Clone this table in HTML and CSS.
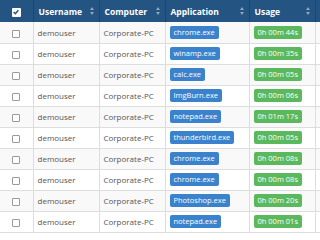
FILE: index.html
```html
<!DOCTYPE html>
<html lang="en">
  <head>
    <meta charset="UTF-8" />
    <title>Usage</title>
    <link rel="stylesheet" href="styles.css">
  </head>
  <body>
    <table class="usage">
      <colgroup>
        <col class="c-check" />
        <col class="c-user" />
        <col class="c-comp" />
        <col class="c-app" />
        <col class="c-time" />
        <col class="c-more" />
      </colgroup>
      <thead>
        <tr>
          <th class="check"><span class="box box-on">
            <svg viewBox="0 0 10 10" width="8" height="8"><path d="M2 5 L4.2 7.2 L8 2.8" fill="none" stroke="#245482" stroke-width="1.8" /></svg>
          </span></th>
          <th>Username<span class="sort"></span></th>
          <th>Computer<span class="sort"></span></th>
          <th>Application<span class="sort"></span></th>
          <th>Usage<span class="sort"></span></th>
          <th></th>
        </tr>
      </thead>
      <tbody>
        <tr><td class="check"><span class="box"></span></td><td>demouser</td><td>Corporate-PC</td><td><span class="label app">chrome.exe</span></td><td><span class="label time">0h 00m 44s</span></td><td></td></tr>
        <tr><td class="check"><span class="box"></span></td><td>demouser</td><td>Corporate-PC</td><td><span class="label app">winamp.exe</span></td><td><span class="label time">0h 00m 35s</span></td><td></td></tr>
        <tr><td class="check"><span class="box"></span></td><td>demouser</td><td>Corporate-PC</td><td><span class="label app">calc.exe</span></td><td><span class="label time">0h 00m 05s</span></td><td></td></tr>
        <tr><td class="check"><span class="box"></span></td><td>demouser</td><td>Corporate-PC</td><td><span class="label app">ImgBurn.exe</span></td><td><span class="label time">0h 00m 06s</span></td><td></td></tr>
        <tr><td class="check"><span class="box"></span></td><td>demouser</td><td>Corporate-PC</td><td><span class="label app">notepad.exe</span></td><td><span class="label time">0h 01m 17s</span></td><td></td></tr>
        <tr><td class="check"><span class="box"></span></td><td>demouser</td><td>Corporate-PC</td><td><span class="label app">thunderbird.exe</span></td><td><span class="label time">0h 00m 05s</span></td><td></td></tr>
        <tr><td class="check"><span class="box"></span></td><td>demouser</td><td>Corporate-PC</td><td><span class="label app">chrome.exe</span></td><td><span class="label time">0h 00m 08s</span></td><td></td></tr>
        <tr><td class="check"><span class="box"></span></td><td>demouser</td><td>Corporate-PC</td><td><span class="label app">chrome.exe</span></td><td><span class="label time">0h 00m 08s</span></td><td></td></tr>
        <tr><td class="check"><span class="box"></span></td><td>demouser</td><td>Corporate-PC</td><td><span class="label app">Photoshop.exe</span></td><td><span class="label time">0h 00m 20s</span></td><td></td></tr>
        <tr><td class="check"><span class="box"></span></td><td>demouser</td><td>Corporate-PC</td><td><span class="label app">notepad.exe</span></td><td><span class="label time">0h 00m 01s</span></td><td></td></tr>
      </tbody>
    </table>
  </body>
</html>
```

FILE: styles.css
```css
* {
  margin: 0;
  padding: 0;
  box-sizing: border-box;
}

body {
  width: 320px;
  height: 240px;
  overflow: hidden;
  background-color: #ffffff;
  font-family: "Open Sans", sans-serif;
  color: #555555;
}

.usage {
  width: 320px;
  table-layout: fixed;
  border-collapse: collapse;
}

.c-check { width: 33px; }
.c-user { width: 66px; }
.c-comp { width: 66px; }
.c-app { width: 84px; }
.c-time { width: 66px; }
.c-more { width: 5px; }

th {
  height: 22px;
  background-color: #245482;
  color: #ffffff;
  font-size: 8.5px;
  font-weight: 700;
  text-align: left;
  padding: 0 5px;
  border-left: 1px solid #1c4670;
  position: relative;
  white-space: nowrap;
}

th:first-child {
  border-left: none;
}

td {
  height: 21px;
  font-size: 8px;
  padding: 0 4px;
  border-left: 1px solid #dddddd;
  border-bottom: 1px solid #dddddd;
  white-space: nowrap;
  overflow: hidden;
}

td:first-child {
  border-left: none;
}

tbody tr:nth-child(odd) td {
  background-color: #f9f9f9;
}

.check {
  text-align: center;
  padding: 0;
}

.box {
  display: inline-block;
  width: 8px;
  height: 8px;
  border: 1px solid #999999;
  border-radius: 1px;
  background-color: #ffffff;
  vertical-align: middle;
}

.box-on {
  border: none;
  width: 9px;
  height: 9px;
}

.box-on svg {
  display: block;
  margin: 0.5px;
}

/* up / down arrows on the right of a header */
.sort {
  position: absolute;
  right: 4px;
  top: 7px;
  width: 5px;
  height: 8px;
}

.sort::before,
.sort::after {
  content: "";
  position: absolute;
  left: 0;
  border-left: 2.5px solid transparent;
  border-right: 2.5px solid transparent;
}

.sort::before {
  top: 0;
  border-bottom: 3px solid #8ea6c0;
}

.sort::after {
  bottom: 0;
  border-top: 3px solid #8ea6c0;
}

.label {
  display: inline-block;
  color: #ffffff;
  font-size: 7.5px;
  line-height: 13px;
  padding: 0 4px;
  border-radius: 2px;
  vertical-align: middle;
}

.app {
  background-color: #3a82cc;
}

.time {
  background-color: #5cb85c;
}
```
